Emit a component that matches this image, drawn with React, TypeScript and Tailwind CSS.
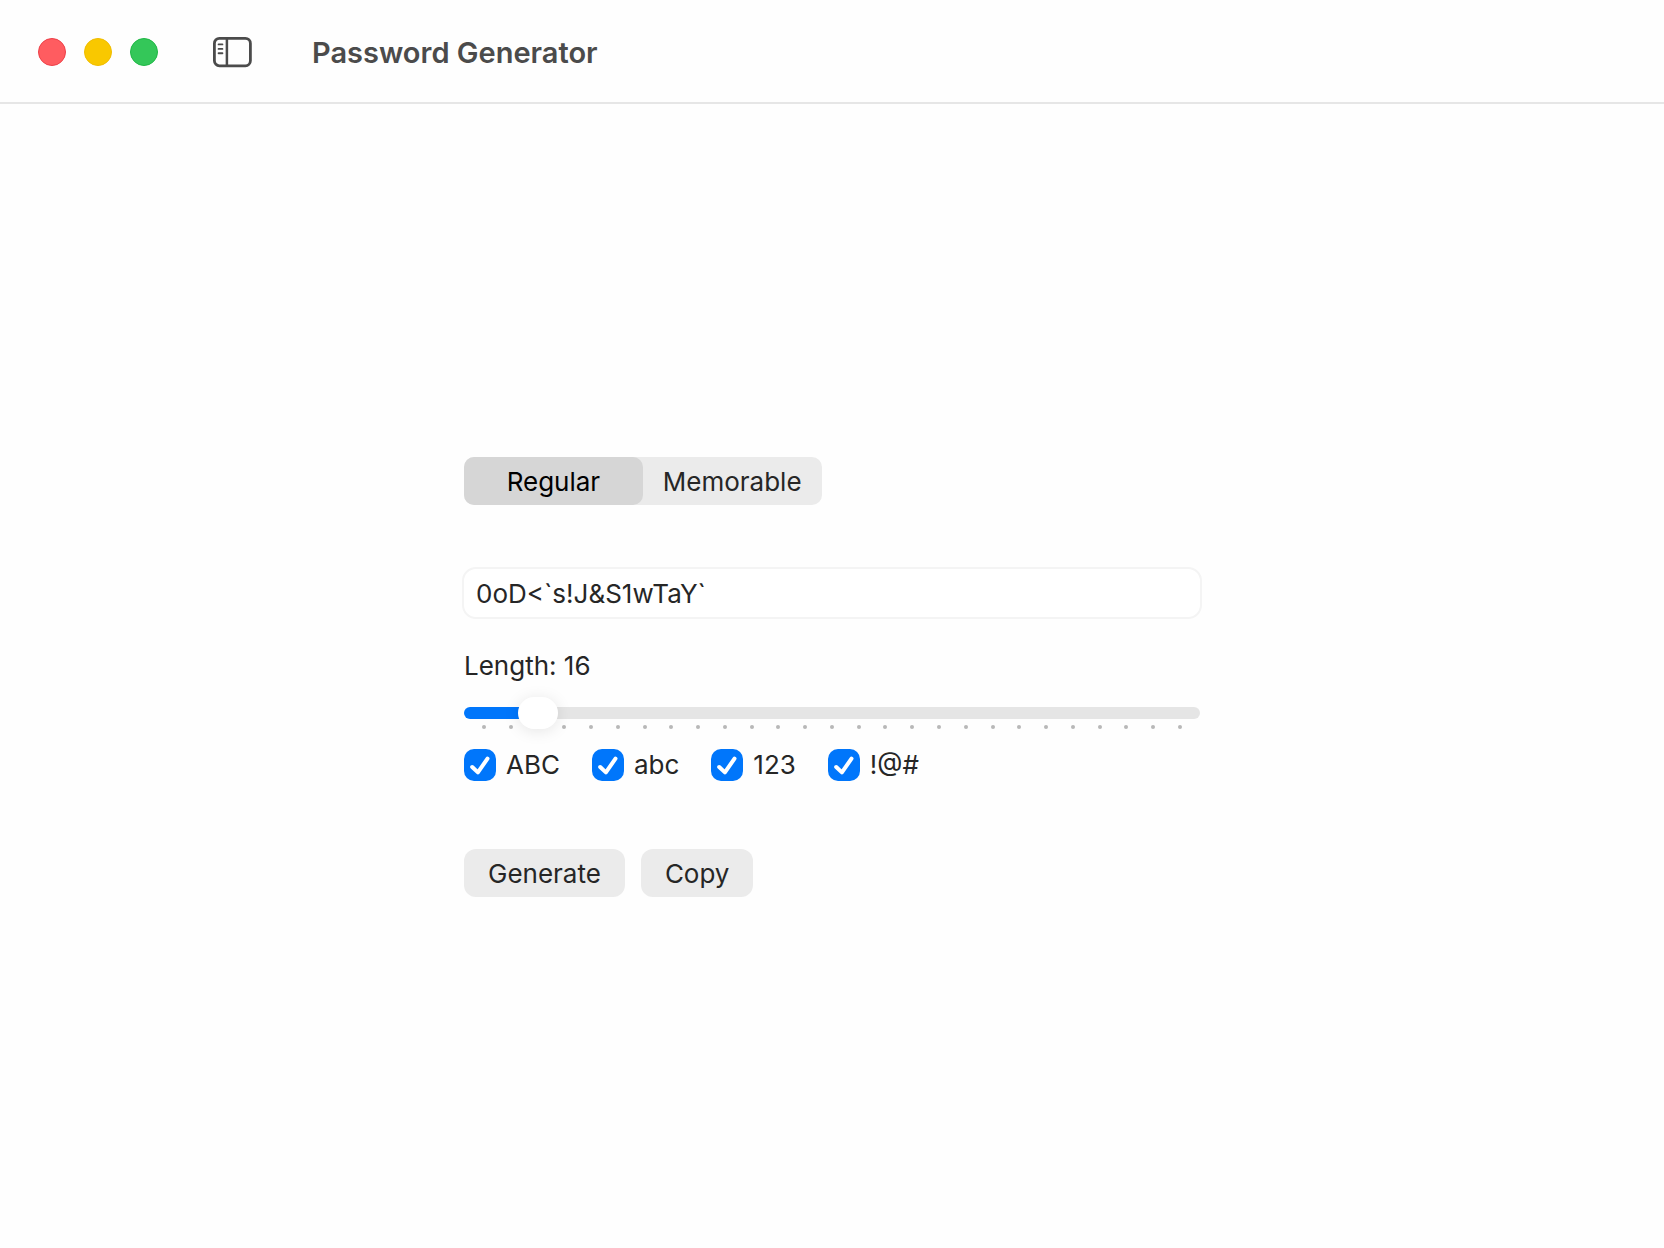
import { useState } from "react";

type CharSet = { id: string; label: string; chars: string };

const CHAR_SETS: CharSet[] = [
  { id: "upper", label: "ABC", chars: "ABCDEFGHIJKLMNOPQRSTUVWXYZ" },
  { id: "lower", label: "abc", chars: "abcdefghijklmnopqrstuvwxyz" },
  { id: "digits", label: "123", chars: "0123456789" },
  { id: "symbols", label: "!@#", chars: "!@#$%^&*()-_=+<>?`~" },
];

const WORDS = ["maple", "river", "cloud", "amber", "stone", "field", "ocean", "ember", "lunar", "cedar"];
const MIN = 12;
const MAX = 64;
const STEP = 2;
const TICKS = Array.from({ length: (MAX - MIN) / STEP + 1 }, (_, i) => MIN + i * STEP);

function pick<T>(items: ArrayLike<T>): T {
  return items[Math.floor(Math.random() * items.length)];
}

function SidebarIcon() {
  return (
    <svg viewBox="0 0 40 32" className="h-8 w-10" fill="none" stroke="#4b4b4b" aria-hidden="true">
      <rect x="2.4" y="2.4" width="36" height="27.4" rx="5" strokeWidth="2.8" />
      <path d="M14.9 2.5v27" strokeWidth="2.5" />
      <path d="M6.6 8.4h3.8M6.6 12.9h3.8M6.6 17.2h3.8" strokeWidth="1.9" strokeLinecap="round" />
    </svg>
  );
}

function TitleBar() {
  return (
    <header className="flex h-[104px] shrink-0 items-center border-b-2 border-[#e6e6e6] pt-0.5 pl-[38px]">
      <div className="flex gap-[18px]">
        <button type="button" aria-label="Close" className="size-7 rounded-full border border-[#ee4048] bg-[#ff5c60]" />
        <button type="button" aria-label="Minimize" className="size-7 rounded-full border border-[#f0bd00] bg-[#f9c800]" />
        <button type="button" aria-label="Zoom" className="size-7 rounded-full border border-[#1fb845] bg-[#34c759]" />
      </div>
      <button type="button" aria-label="Toggle sidebar" className="ml-[54px]">
        <SidebarIcon />
      </button>
      <h1 className="ml-[60px] pt-0.5 text-[29px] leading-9 font-semibold text-[#4b4b4b]">Password Generator</h1>
    </header>
  );
}

function Segment({ label, selected, onSelect }: { label: string; selected: boolean; onSelect: () => void }) {
  return (
    <button
      type="button"
      aria-pressed={selected}
      onClick={onSelect}
      className={selected ? "h-12 rounded-[10px] bg-[#d6d6d6] px-5 pt-0.5 text-black" : "h-12 rounded-[10px] px-5 pt-0.5"}
    >
      {label}
    </button>
  );
}

function LengthSlider({ value, onChange }: { value: number; onChange: (value: number) => void }) {
  const percent = ((value - MIN) / (MAX - MIN)) * 100;
  return (
    <div className="mt-[15px] flex flex-col">
      <input
        id="length"
        type="range"
        min={MIN}
        max={MAX}
        step={STEP}
        value={value}
        onChange={(e) => onChange(Number(e.target.value))}
        style={{
          backgroundImage: `linear-gradient(to right, #0076fb calc(20px + (100% - 40px) * ${percent / 100}), #e5e5e5 0)`,
        }}
        className="relative z-10 my-[10px] block h-3 w-full appearance-none rounded-full outline-none [&::-webkit-slider-thumb]:h-8 [&::-webkit-slider-thumb]:w-10 [&::-webkit-slider-thumb]:appearance-none [&::-webkit-slider-thumb]:rounded-full [&::-webkit-slider-thumb]:bg-white [&::-webkit-slider-thumb]:shadow-[0_2px_16px_rgba(0,0,0,0.1)]"
      />
      <div className="-mt-1 flex justify-between px-[18px]" aria-hidden="true">
        {TICKS.map((tick) => (
          <span key={tick} className="size-1 rounded-full bg-[#b8b8b8]" />
        ))}
      </div>
    </div>
  );
}

function CheckOption({ id, label, checked, onToggle }: { id: string; label: string; checked: boolean; onToggle: () => void }) {
  return (
    <label htmlFor={id} className="flex items-center gap-[10px]">
      <span className="relative size-8">
        <input
          id={id}
          type="checkbox"
          checked={checked}
          onChange={onToggle}
          className="block size-8 appearance-none rounded-[10px] bg-[#e5e5e5] checked:bg-[#0076fb]"
        />
        {checked && (
          <svg viewBox="0 0 32 32" fill="none" className="pointer-events-none absolute inset-0 size-8" aria-hidden="true">
            <path d="M8.2 18 13.9 23.4 23.5 9.6" stroke="white" strokeWidth="4" strokeLinecap="round" strokeLinejoin="round" />
          </svg>
        )}
      </span>
      {label}
    </label>
  );
}

export default function App() {
  const [mode, setMode] = useState<"regular" | "memorable">("regular");
  const [length, setLength] = useState(16);
  const [enabled, setEnabled] = useState<string[]>(CHAR_SETS.map((s) => s.id));
  const [password, setPassword] = useState("0oD<`s!J&S1wTaY`");

  const toggle = (id: string) =>
    setEnabled((ids) => (ids.includes(id) ? ids.filter((x) => x !== id) : [...ids, id]));

  const generate = () => {
    if (mode === "memorable") {
      setPassword(Array.from({ length: 4 }, () => pick(WORDS)).join("-"));
      return;
    }
    const pool = CHAR_SETS.filter((s) => enabled.includes(s.id)).map((s) => s.chars).join("");
    if (pool) setPassword(Array.from({ length }, () => pick(pool)).join(""));
  };

  return (
    <div className="flex min-h-screen flex-col bg-[#fefefe] font-['Inter',sans-serif] text-[26px] leading-8 text-[#262626]">
      <TitleBar />
      <main className="flex grow flex-col items-center justify-center px-6 pt-0.5">
        <div className="w-full max-w-[736px]">
          <div role="group" aria-label="Password type" className="grid w-fit grid-cols-2 rounded-[10px] bg-[#ebebeb]">
            <Segment label="Regular" selected={mode === "regular"} onSelect={() => setMode("regular")} />
            <Segment label="Memorable" selected={mode === "memorable"} onSelect={() => setMode("memorable")} />
          </div>

          <div className="-mx-0.5 mt-[62px]">
            <input
              type="text"
              aria-label="Password"
              value={password}
              onChange={(e) => setPassword(e.target.value)}
              className="block h-[52px] w-full rounded-[14px] border-2 border-[#f4f4f4] bg-white px-3 outline-none"
            />
          </div>

          <label htmlFor="length" className="mt-[31px] block">
            Length: {length}
          </label>
          <LengthSlider value={length} onChange={setLength} />

          <div className="mt-5 flex gap-8">
            {CHAR_SETS.map((set) => (
              <CheckOption
                key={set.id}
                id={set.id}
                label={set.label}
                checked={enabled.includes(set.id)}
                onToggle={() => toggle(set.id)}
              />
            ))}
          </div>

          <div className="mt-[68px] flex gap-4">
            <button type="button" onClick={generate} className="h-12 rounded-xl bg-[#ebebeb] px-6 pt-0.5">
              Generate
            </button>
            <button
              type="button"
              onClick={() => navigator.clipboard?.writeText(password)}
              className="h-12 rounded-xl bg-[#ebebeb] px-6 pt-0.5"
            >
              Copy
            </button>
          </div>
        </div>
      </main>
    </div>
  );
}
